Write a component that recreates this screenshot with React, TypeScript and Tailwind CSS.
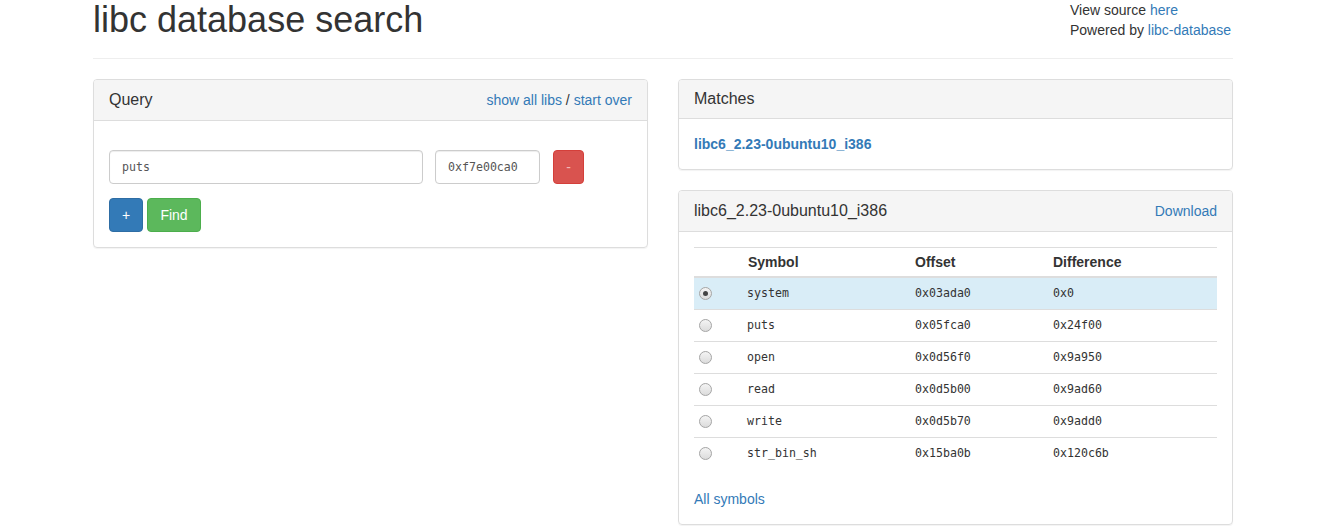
import React from 'react';

const rows = [
  { sym: 'system', off: '0x03ada0', diff: '0x0', checked: true },
  { sym: 'puts', off: '0x05fca0', diff: '0x24f00' },
  { sym: 'open', off: '0x0d56f0', diff: '0x9a950' },
  { sym: 'read', off: '0x0d5b00', diff: '0x9ad60' },
  { sym: 'write', off: '0x0d5b70', diff: '0x9add0' },
  { sym: 'str_bin_sh', off: '0x15ba0b', diff: '0x120c6b' },
];

const mono = "font-['DejaVu_Sans_Mono',monospace] text-[11.6px]";

const Radio: React.FC<{ checked?: boolean }> = ({ checked }) => (
  <span className="inline-flex w-[13px] h-[13px] rounded-full border border-[#a6a6a6] bg-gradient-to-b from-[#f4f4f4] to-[#dcdcdc] items-center justify-center">
    {checked && <span className="w-[5px] h-[5px] rounded-full bg-[#444]" />}
  </span>
);

export default function App() {
  return (
    <div className="w-[1318px] min-h-[526px] bg-white text-[#333] text-[14px] leading-[20px] font-['Liberation_Sans',Arial,sans-serif]">
      <div className="pl-[78px] w-[1248px]">
        <div className="px-[15px]">
          {/* Header */}
          <div className="flex justify-between items-start border-b border-[#eee] pb-[9px]">
            <h1 className="text-[36px] leading-[39px] font-medium mb-[10px]">libc database search</h1>
            <div className="w-[163px]">
              <div>
                View source <a className="text-[#337ab7]">here</a>
              </div>
              <div>
                Powered by <a className="text-[#337ab7]">libc-database</a>
              </div>
            </div>
          </div>

          <div className="flex gap-[30px] mt-[20px]">
            {/* Query panel */}
            <div className="w-[555px]">
              <div className="border border-[#ddd] rounded-[4px] shadow-[0_1px_1px_rgba(0,0,0,0.05)]">
                <div className="flex justify-between items-center bg-[#f5f5f5] border-b border-[#ddd] px-[15px] py-[10px] rounded-t-[3px]">
                  <h3 className="text-[16px] leading-[1.1]">Query</h3>
                  <div>
                    <a className="text-[#337ab7]">show all libs</a> / <a className="text-[#337ab7]">start over</a>
                  </div>
                </div>
                <div className="px-[15px] pt-[29px] pb-[15px]">
                  <div className="flex items-center">
                    <div className={`w-[314px] h-[34px] border border-[#ccc] rounded-[4px] px-[12px] flex items-center shadow-[inset_0_1px_1px_rgba(0,0,0,0.075)] ${mono} text-[#555]`}>
                      puts
                    </div>
                    <div className={`ml-[12px] w-[105px] h-[34px] border border-[#ccc] rounded-[4px] px-[12px] flex items-center shadow-[inset_0_1px_1px_rgba(0,0,0,0.075)] ${mono} text-[#555]`}>
                      0xf7e00ca0
                    </div>
                    <button className="ml-[13px] w-[31px] h-[34px] rounded-[4px] bg-[#d9534f] border border-[#d43f3a] text-[#f2b8b6] flex items-center justify-center">
                      -
                    </button>
                  </div>
                  <div className="flex gap-[4px] mt-[14px]">
                    <button className="w-[34px] h-[34px] rounded-[4px] bg-[#337ab7] border border-[#2e6da4] text-white flex items-center justify-center">
                      +
                    </button>
                    <button className="w-[54px] h-[34px] rounded-[4px] bg-[#5cb85c] border border-[#4cae4c] text-white flex items-center justify-center">
                      Find
                    </button>
                  </div>
                </div>
              </div>
            </div>

            {/* Right column */}
            <div className="w-[555px]">
              <div className="border border-[#ddd] rounded-[4px] shadow-[0_1px_1px_rgba(0,0,0,0.05)] mb-[20px]">
                <div className="bg-[#f5f5f5] border-b border-[#ddd] px-[15px] py-[10px] rounded-t-[3px]">
                  <h3 className="text-[16px] leading-[1.1]">Matches</h3>
                </div>
                <div className="p-[15px]">
                  <a className="text-[#337ab7] font-bold">libc6_2.23-0ubuntu10_i386</a>
                </div>
              </div>

              <div className="border border-[#ddd] rounded-[4px] shadow-[0_1px_1px_rgba(0,0,0,0.05)]">
                <div className="flex justify-between items-center bg-[#f5f5f5] border-b border-[#ddd] px-[15px] py-[10px] rounded-t-[3px]">
                  <h3 className="text-[16px] leading-[1.1]">libc6_2.23-0ubuntu10_i386</h3>
                  <a className="text-[#337ab7]">Download</a>
                </div>
                <div className="p-[15px]">
                  <table className="w-full border-collapse mb-[20px]">
                    <thead>
                      <tr className="border-t border-[#ddd] border-b-2 border-b-[#ddd]">
                        <th className="w-[49px] h-[30px] px-[5px] text-left"></th>
                        <th className="w-[167px] px-[5px] text-left font-bold">Symbol</th>
                        <th className="w-[138px] px-[5px] text-left font-bold">Offset</th>
                        <th className="px-[5px] text-left font-bold">Difference</th>
                      </tr>
                    </thead>
                    <tbody>
                      {rows.map((r, i) => (
                        <tr
                          key={r.sym}
                          className={`${i > 0 ? 'border-t border-[#ddd]' : ''} ${r.checked ? 'bg-[#d9edf7]' : ''}`}
                        >
                          <td className="h-[32px] px-[5px] align-middle">
                            <div className="flex items-center"><Radio checked={r.checked} /></div>
                          </td>
                          <td className={`pl-[4px] pr-[5px] ${mono}`}>{r.sym}</td>
                          <td className={`px-[5px] ${mono}`}>{r.off}</td>
                          <td className={`px-[5px] ${mono}`}>{r.diff}</td>
                        </tr>
                      ))}
                    </tbody>
                  </table>
                  <a className="text-[#337ab7]">All symbols</a>
                </div>
              </div>
            </div>
          </div>
        </div>
      </div>
    </div>
  );
}
